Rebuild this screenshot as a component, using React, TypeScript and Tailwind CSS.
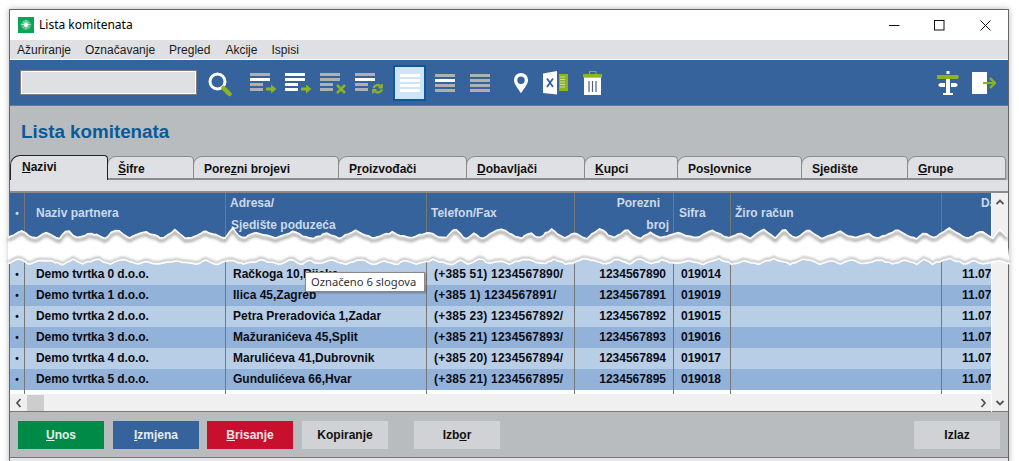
// Lista komitenata window with a torn-paper break through the table

const GREEN = '#8db31e';
const GRAY = '#b0b0b0';
const BLUE = '#36639b';

const rowGrid =
  'grid grid-cols-[15px_201px_201px_148px_99px_57px_211px_49px] w-[981px]';
const cell = 'border-r border-[#777] overflow-hidden whitespace-nowrap';
const mnemonic = 'underline [text-decoration-skip-ink:none]';

const rows = [
  ['Demo tvrtka 0 d.o.o.', 'Račkoga 10,Rijeka', '(+385 51) 1234567890/', '1234567890', '019014'],
  ['Demo tvrtka 1 d.o.o.', 'Ilica 45,Zagreb', '(+385 1) 1234567891/', '1234567891', '019019'],
  ['Demo tvrtka 2 d.o.o.', 'Petra Preradovića 1,Zadar', '(+385 23) 1234567892/', '1234567892', '019015'],
  ['Demo tvrtka 3 d.o.o.', 'Mažuranićeva 45,Split', '(+385 21) 1234567893/', '1234567893', '019016'],
  ['Demo tvrtka 4 d.o.o.', 'Marulićeva 41,Dubrovnik', '(+385 20) 1234567894/', '1234567894', '019017'],
  ['Demo tvrtka 5 d.o.o.', 'Gundulićeva 66,Hvar', '(+385 21) 1234567895/', '1234567895', '019018'],
];

// repeatable jagged edge for the tear: uneven triangular hills with a little noise
function jagged(base: number, amp: number, seed: number) {
  let s = seed;
  const rnd = () => {
    s = (s * 16807) % 2147483647;
    return s / 2147483647;
  };
  for (let i = 0; i < 5; i++) rnd();
  const pts: [number, number][] = [];
  let x = 8;
  while (x < 1010) {
    const x0 = x;
    const w = 14 + rnd() * 22;
    const h = amp * (0.45 + 0.55 * rnd());
    while (x < x0 + w) {
      const f = (x - x0) / w;
      const y = base - h * (1 - Math.abs(2 * f - 1)) + (rnd() - 0.5) * 1.6;
      pts.push([Math.round(x * 10) / 10, Math.round(y * 10) / 10]);
      x += 2 + rnd() * 2.5;
    }
  }
  return pts;
}

const topEdge = jagged(12, 10, 4711);
const bottomEdge = jagged(38, 6, 90210);
const toStr = (pts: [number, number][]) => pts.map((p) => p.join(',')).join(' ');
const shifted = (pts: [number, number][], dy: number) =>
  toStr(pts.map(([x, y]) => [x, y + dy] as [number, number]));

function Tear() {
  const band = toStr(topEdge) + ' ' + toStr([...bottomEdge].reverse());
  return (
    <svg className="absolute left-0 top-[226px]" width="1019" height="42" viewBox="0 0 1019 42">
      <polygon points={band} fill="#fff" />
      <polyline points={shifted(topEdge, 3)} fill="none" stroke="#8a8a8a" strokeWidth="2" className="blur-[1.5px]" />
      <polyline points={shifted(bottomEdge, -2)} fill="none" stroke="#a8a8a8" strokeWidth="1.500" className="blur-[1.2px]" />
      <polyline points={toStr(topEdge)} fill="none" stroke="#fff" strokeWidth="1.400" />
      <polyline points={toStr(bottomEdge)} fill="none" stroke="#fff" strokeWidth="1.400" />
    </svg>
  );
}

function Bars({ colors, badge }: { colors: string[]; badge: 'arrow' | 'x' | 'refresh' }) {
  return (
    <svg width="28" height="45" viewBox="0 0 28 45" className="shrink-0">
      <rect x="0" y="13" width="20" height="3" fill={colors[0]} />
      <rect x="0" y="18" width="20" height="3" fill={colors[1]} />
      <rect x="0" y="23" width="13" height="3" fill={colors[2]} />
      <rect x="0" y="28" width="13" height="3" fill={colors[3]} />
      {badge === 'arrow' && (
        <path d="M16 27.500h5v-3l5.500 4.500-5.500 4.500v-3h-5z" fill={GREEN} />
      )}
      {badge === 'x' && <path d="M17 25l8 8m0-8l-8 8" stroke={GREEN} strokeWidth="2.500" fill="none" />}
      {badge === 'refresh' && (
        <g fill="none" stroke={GREEN} strokeWidth="2.400">
          <path d="M18.500 28a4.500 4.500 0 0 1 7.500-1.500" />
          <path d="M27 29.500a4.500 4.500 0 0 1-7.500 1.500" />
          <path d="M27 24v3.500h-3.500M18 33.500V30h3.500" strokeWidth="1.800" />
        </g>
      )}
    </svg>
  );
}

function Stack({ colors, top = 14 }: { colors: string[]; top?: number }) {
  return (
    <svg width="20" height="45" viewBox="0 0 20 45" className="shrink-0">
      {colors.map((c, i) => (
        <rect key={i} x="0" y={top + i * 5} width="20" height="3" fill={c} />
      ))}
    </svg>
  );
}

function Toolbar() {
  return (
    <div className="flex items-center h-[45px] bg-[#36639b] pl-[10px] pr-[12px]">
      <div className="w-[177px] h-[25px] bg-[#dfe0e4] border border-[#808080] outline outline-1 -outline-offset-2 outline-white" />
      <svg width="24" height="45" viewBox="0 0 24 45" className="ml-[11px] shrink-0">
        <circle cx="9.500" cy="21.500" r="7.500" fill="none" stroke="#fff" strokeWidth="3" />
        <path d="M15.500 28l6 6" stroke={GREEN} strokeWidth="4.500" strokeLinecap="round" />
      </svg>
      <div className="ml-[18px]"><Bars colors={[GRAY, '#fff', GRAY, GRAY]} badge="arrow" /></div>
      <div className="ml-[7px]"><Bars colors={['#fff', '#fff', '#fff', '#fff']} badge="arrow" /></div>
      <div className="ml-[7px]"><Bars colors={[GRAY, GRAY, GRAY, GRAY]} badge="x" /></div>
      <div className="ml-[7px]"><Bars colors={[GRAY, '#fff', GRAY, GRAY]} badge="refresh" /></div>
      <div className="ml-[10px] w-[33px] h-[36px] bg-[#cfe4f7] border-2 border-[#0a5a9a] flex items-center justify-center">
        <svg width="20" height="18" viewBox="0 0 20 18">
          <rect y="0" width="20" height="3" fill="#fff" />
          <rect y="5" width="20" height="3" fill="#fff" />
          <rect y="10" width="20" height="3" fill="#fff" />
          <rect y="15" width="20" height="3" fill="#fff" />
        </svg>
      </div>
      <div className="ml-[9px]"><Stack colors={[GRAY, '#fff', GRAY, GRAY]} /></div>
      <div className="ml-[15px]"><Stack colors={[GRAY, GRAY, GRAY, GRAY]} /></div>
      <svg width="14" height="45" viewBox="0 0 14 45" className="ml-[24px] shrink-0">
        <path
          fillRule="evenodd"
          d="M7 13a7 7 0 0 1 7 7.200c0 4-4.500 9-7 13-2.500-4-7-9-7-13A7 7 0 0 1 7 13zm0 3.500a3.700 3.700 0 1 0 0 7.400 3.700 3.700 0 0 0 0-7.400z"
          fill="#fff"
        />
      </svg>
      <svg width="25" height="45" viewBox="0 0 25 45" className="ml-[15px] shrink-0">
        <path d="M0 13.500L14 11v23.500L0 33z" fill="#fff" />
        <path d="M4 18.500l6 8.500m0-8.500l-6 8.500" stroke={BLUE} strokeWidth="1.800" fill="none" />
        <rect x="16" y="14" width="9" height="17" fill={GREEN} />
        <path d="M17 17h5M17 19.500h5M17 22h5M17 24.500h5M17 27h5" stroke="#dfe8b0" strokeWidth="0.800" />
      </svg>
      <svg width="20" height="45" viewBox="0 0 20 45" className="ml-[15px] shrink-0">
        <path d="M6.500 14v-2.500h6.500V14" fill="none" stroke={GREEN} strokeWidth="1.200" />
        <rect x="0" y="14" width="19" height="3.500" fill={GREEN} />
        <path d="M1 17.500h17V35H1z" fill="#fff" />
        <path d="M6 21v11M9.500 21v11M13 21v11" stroke="#4f6478" strokeWidth="1.200" />
      </svg>
      <svg width="22" height="45" viewBox="0 0 22 45" className="ml-auto shrink-0">
        <rect x="9.500" y="11" width="3" height="3" fill="#fff" />
        <path d="M0 15h21l1 2-1 2H0z" fill={GREEN} />
        <rect x="9" y="19" width="4" height="15" fill="#fff" />
        <path d="M8 23v4H3l-2-2 2-2zM14 23v4h5l2-2-2-2z" fill="#fff" />
        <rect x="6" y="33" width="10" height="2" fill="#fff" />
      </svg>
      <svg width="24" height="45" viewBox="0 0 24 45" className="ml-[13px] shrink-0">
        <rect x="0" y="12" width="15" height="22" fill="#fff" />
        <path d="M11 23h11" stroke={GREEN} strokeWidth="2.200" />
        <path d="M18 18l5 5-5 5" stroke={GREEN} strokeWidth="2.400" fill="none" />
      </svg>
    </div>
  );
}

const tabClass =
  'h-[23px] border border-[#8a8a8a] rounded-tl-[9px] rounded-tr-[4px] bg-[#dfe0e4] pl-[10px] text-[12px] font-bold text-[#111] leading-[25px] -ml-px';

function Tabs() {
  return (
    <>
      <div className="flex items-end h-[25px] border-b border-[#8a8a8a] w-[996px]">
        <div className="w-[98px] h-[25px] border border-b-0 border-[#222] rounded-tl-[10px] rounded-tr-[4px] bg-[#dfe0e4] pl-[11px] text-[12px] font-bold text-[#111] leading-[22px] relative z-10 -mb-px">
          <span className={mnemonic}>N</span>azivi
        </div>
        <div className={tabClass + ' w-[87px]'}><span className={mnemonic}>Š</span>ifre</div>
        <div className={tabClass + ' w-[146px]'}>Pore<span className={mnemonic}>z</span>ni brojevi</div>
        <div className={tabClass + ' w-[129px]'}>P<span className={mnemonic}>r</span>oizvođači</div>
        <div className={tabClass + ' w-[119px]'}><span className={mnemonic}>D</span>obavljači</div>
        <div className={tabClass + ' w-[94px]'}><span className={mnemonic}>K</span>upci</div>
        <div className={tabClass + ' w-[125px]'}>Pos<span className={mnemonic}>l</span>ovnice</div>
        <div className={tabClass + ' w-[107px]'}>S<span className={mnemonic}>j</span>edište</div>
        <div className={tabClass + ' w-[99px]'}><span className={mnemonic}>G</span>rupe</div>
      </div>
      <div className="h-[13px] bg-[#dfe0e4] border-b-2 border-[#8a8a8a]" />
    </>
  );
}

function TableArea() {
  return (
    <div className="flex h-[201px]">
      <div className="w-[981px] shrink-0 flex flex-col bg-white">
        <div className={rowGrid + ' h-[65px] bg-[#36639b] text-[12px] font-bold text-[#cddaea]'}>
          <div className={cell + ' text-center text-[10px] pt-[13px]'}>•</div>
          <div className={cell + ' pl-[11px] pt-[11px]'}>Naziv partnera</div>
          <div className={cell + ' pl-[4px] leading-[22px]'}>
            <div className="-mt-px">Adresa/<br /><span className="pl-px">Sjedište poduzeća</span></div>
          </div>
          <div className={cell + ' pl-[4px] pt-[11px]'}>Telefon/Fax</div>
          <div className={cell + ' text-right pr-[4px] leading-[22px]'}>
            <div className="-mt-px"><span className="pr-[9px]">Porezni</span><br />broj</div>
          </div>
          <div className={cell + ' pl-[5px] pt-[11px]'}>Sifra</div>
          <div className={cell + ' pl-[4px] pt-[11px]'}>Žiro račun</div>
          <div className="overflow-hidden whitespace-nowrap pl-[39px] leading-[22px]"><div className="-mt-px">Datum</div></div>
        </div>
        {/* part of the first row's colour that shows under the tear */}
        <div className={rowGrid + ' h-[6px] bg-[#b8cee6]'}>
          <div className="border-r border-[#777]" />
          <div className="border-r border-[#777]" />
          <div className="border-r border-[#777]" />
          <div className="border-r border-[#777]" />
          <div className="border-r border-[#777]" />
          <div className="border-r border-[#777]" />
          <div className="border-r border-[#777]" />
          <div />
        </div>
        {rows.map((r, i) => (
          <div
            key={r[4]}
            className={
              rowGrid +
              ' h-[21px] text-[12px] font-bold text-[#0c0c14] leading-[21px] ' +
              (i % 2 === 0 ? 'bg-[#b8cee6]' : 'bg-[#93b2da]')
            }
          >
            <div className={cell + ' text-center text-[10px]'}>•</div>
            <div className={cell + ' pl-[11px] tracking-[-0.1px]'}>{r[0]}</div>
            <div className={cell + ' pl-[7px]'}>{r[1]}</div>
            <div className={cell + ' pl-[7px] tracking-[0.2px]'}>{r[2]}</div>
            <div className={cell + ' text-right pr-[7px]'}>{r[3]}</div>
            <div className={cell + ' pl-[7px]'}>{r[4]}</div>
            <div className={cell} />
            <div className="overflow-hidden whitespace-nowrap pl-[20px]">11.07.2019</div>
          </div>
        ))}
        <div className={rowGrid + ' h-[4px]'}>
          <div className="border-r border-[#777]" />
          <div className="border-r border-[#777]" />
          <div className="border-r border-[#777]" />
          <div className="border-r border-[#777]" />
          <div className="border-r border-[#777]" />
          <div className="border-r border-[#777]" />
          <div className="border-r border-[#777]" />
          <div />
        </div>
      </div>
      <div className="w-[17px] bg-[#f0f0f0] border-l border-white flex flex-col items-center pt-[5px]">
        <svg width="10" height="8" viewBox="0 0 10 8">
          <path d="M1.500 6L5 2.500 8.500 6" fill="none" stroke="#555" strokeWidth="1.800" />
        </svg>
      </div>
    </div>
  );
}

function HScroll() {
  return (
    <div className="flex items-center h-[17px] bg-[#f0f0f0] border-t border-transparent">
      <svg width="17" height="16" viewBox="0 0 17 16" className="shrink-0">
        <path d="M10.500 4L7 8l3.500 4" fill="none" stroke="#555" strokeWidth="1.800" />
      </svg>
      <div className="w-[17px] h-[16px] bg-[#cdcdcd]" />
      <svg width="17" height="16" viewBox="0 0 17 16" className="ml-auto shrink-0 mr-[-1px]">
        <path d="M6.500 4L10 8l-3.500 4" fill="none" stroke="#555" strokeWidth="1.800" />
      </svg>
      <div className="w-[17px] h-[17px] border-l border-white flex items-center justify-center">
        <svg width="10" height="8" viewBox="0 0 10 8">
          <path d="M1.500 2L5 5.500 8.500 2" fill="none" stroke="#555" strokeWidth="1.800" />
        </svg>
      </div>
    </div>
  );
}

const btn = 'w-[86px] h-[28px] text-[12px] font-bold flex items-center justify-center';

function Footer() {
  return (
    <div className="flex items-center h-[45px] pl-[8px] pr-[8px] bg-[#b8bcbf]">
      <div className={btn + ' bg-[#008a47] text-[#e6efe9]'}><span><span className={mnemonic}>U</span>nos</span></div>
      <div className={btn + ' ml-[9px] bg-[#36639b] text-[#e6ecf4]'}><span><span className={mnemonic}>I</span>zmjena</span></div>
      <div className={btn + ' ml-[8px] bg-[#c8102e] text-[#f5e4e6]'}><span><span className={mnemonic}>B</span>risanje</span></div>
      <div className={btn + ' ml-[9px] bg-[#d0d2d6] text-[#111]'}>Kopiranje</div>
      <div className={btn + ' ml-[26px] bg-[#d0d2d6] text-[#111]'}><span>Izb<span className={mnemonic}>o</span>r</span></div>
      <div className={btn + ' ml-auto bg-[#d0d2d6] text-[#111]'}>Izlaz</div>
    </div>
  );
}

export default function App() {
  return (
    <div className="relative w-[1019px] h-[461px] overflow-hidden bg-white font-['Liberation_Sans',Arial,sans-serif]">
      <div className="ml-[9px] mt-[9px] w-[1000px] border border-[#666] shadow-[0_0_6px_rgba(0,0,0,0.3)] bg-[#dfe0e4]">
        {/* title bar */}
        <div className="flex items-center h-[30px] bg-white">
          <svg width="16" height="16" viewBox="0 0 16 16" className="ml-[8px] shrink-0">
            <rect width="16" height="16" fill="#0aa454" />
            <circle cx="8" cy="8" r="5" fill="#fff" opacity="0.3" />
            <path
              d="M8 1.500l.5 5 3-2.500-2.500 3 5 .5-5 .5 2.500 3-3-2.500-.5 5-.5-5-3 2.500 2.500-3-5-.5 5-.5-2.500-3 3 2.500z"
              fill="#fff"
            />
            <circle cx="8" cy="8" r="2" fill="#fff" />
          </svg>
          <span className="ml-[5px] text-[12px] text-black font-['Noto_Sans',sans-serif]">Lista komitenata</span>
          <svg width="11" height="11" viewBox="0 0 11 11" className="ml-auto shrink-0">
            <path d="M0 5.500h10.500" stroke="#111" strokeWidth="1" />
          </svg>
          <svg width="11" height="11" viewBox="0 0 11 11" className="ml-[34px] shrink-0">
            <rect x="0.500" y="0.500" width="9.500" height="9.500" fill="none" stroke="#111" />
          </svg>
          <svg width="11" height="11" viewBox="0 0 11 11" className="ml-[35px] mr-[17px] shrink-0">
            <path d="M0.500 0.500l10 10m0-10l-10 10" stroke="#111" />
          </svg>
        </div>
        {/* menu */}
        <div className="flex items-center gap-[14px] h-[20px] pl-[7px] text-[12px] text-[#1a1a1a] bg-[#dfe0e4] border-b border-white">
          <span>Ažuriranje</span>
          <span>Označavanje</span>
          <span>Pregled</span>
          <span className="ml-px">Akcije</span>
          <span>Ispisi</span>
        </div>
        <Toolbar />
        <div className="bg-[#b8bcbf] border-t border-[#777]">
          <div className="h-[49px] pl-[11px] pt-[15px] text-[18.800px] leading-[22px] font-bold text-[#0a5a9a]">
            Lista komitenata
          </div>
          <Tabs />
          <TableArea />
          <HScroll />
          <div className="h-px bg-[#777]" />
          <Footer />
          <div className="h-px bg-[#777]" />
          <div className="h-[4px] bg-[#e6e6e8]" />
        </div>
      </div>
      <Tear />
      {/* tooltip over the first row */}
      <div className="absolute left-[305px] top-[272px] w-[120px] h-[20px] bg-white border border-[#888] shadow-[1px_1px_2px_rgba(0,0,0,0.3)] pl-[5px] text-[11.200px] leading-[18px] text-[#333] font-['Noto_Sans',sans-serif] whitespace-nowrap overflow-hidden">
        Označeno 6 slogova
      </div>
    </div>
  );
}
